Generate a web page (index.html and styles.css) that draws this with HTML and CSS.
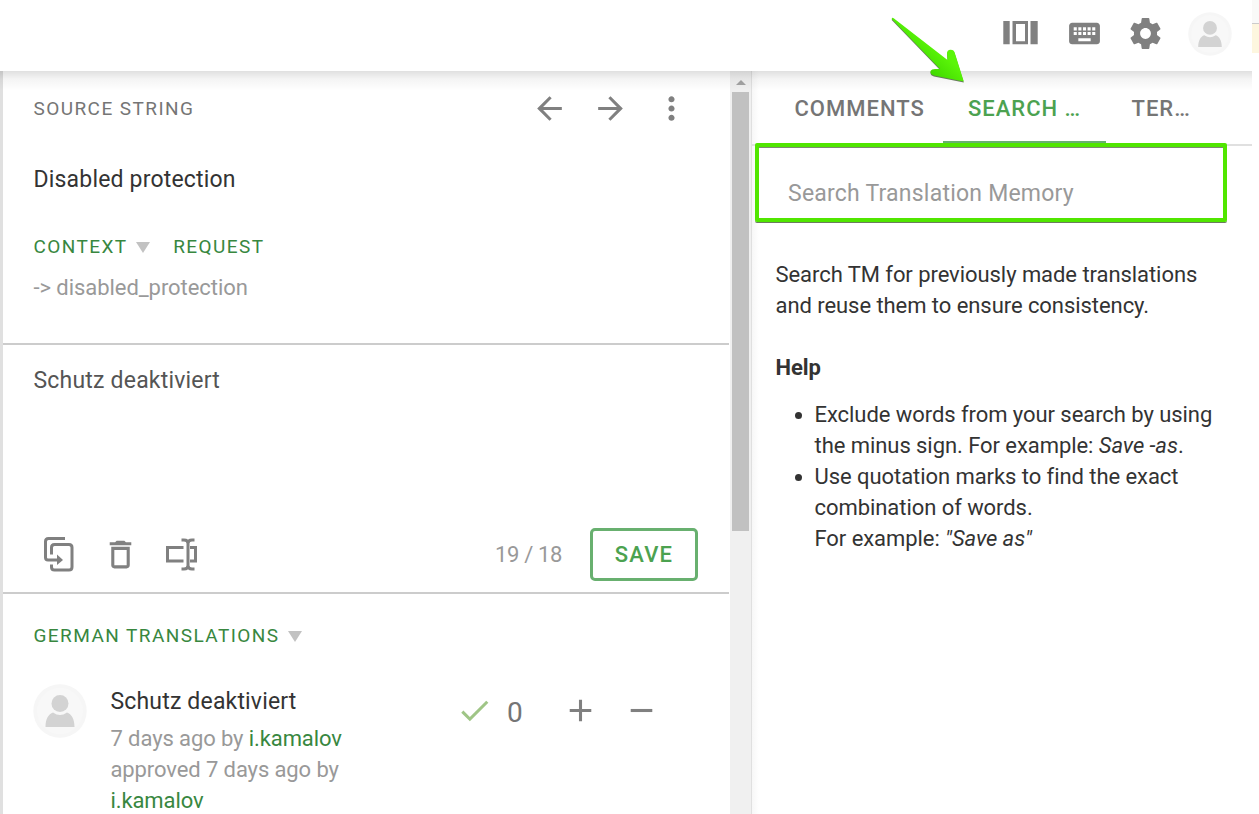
FILE: index.html
```html
<!DOCTYPE html>
<html lang="en">
<head>
<meta charset="utf-8">
<title>Translation editor</title>
<link rel="stylesheet" href="styles.css">
</head>
<body>
<svg width="0" height="0" class="defs">
  <symbol id="person" viewBox="0 0 54 54">
    <circle cx="27" cy="27" r="26.700" fill="#f6f6f6"/>
    <circle cx="27" cy="27" r="23" fill="#f8f8f8"/>
    <circle cx="27" cy="19.500" r="8.500" fill="#d3d3d3"/>
    <path d="M12.500 43C12.500 35 15.500 30 20 28.500Q27 33.500 34 28.500C38.500 30 41.500 35 41.500 43Z" fill="#d3d3d3"/>
  </symbol>
</svg>
<div class="app">
  <div class="window">
    <header class="topbar">
      <svg class="icon columns" viewBox="0 0 37 37"><path fill-rule="evenodd" d="M1.300 6H7.700V29.300H1.300ZM10.500 6H26V29.300H10.500ZM14 9V26.300H23V9ZM28.500 6H35.700V29.300H28.500Z"/></svg>
      <svg class="icon" viewBox="0 0 24 24"><path d="M20 5H4c-1.100 0-1.990.9-1.990 2L2 17c0 1.100.9 2 2 2h16c1.100 0 2-.9 2-2V7c0-1.100-.9-2-2-2zm-9 3h2v2h-2V8zm0 3h2v2h-2v-2zM8 8h2v2H8V8zm0 3h2v2H8v-2zm-1 2H5v-2h2v2zm0-3H5V8h2v2zm9 7H8v-2h8v2zm0-4h-2v-2h2v2zm0-3h-2V8h2v2zm3 3h-2v-2h2v2zm0-3h-2V8h2v2z"/></svg>
      <svg class="icon" viewBox="0 0 24 24"><path d="M19.430 12.980c.04-.32.07-.64.07-.98s-.03-.66-.07-.98l2.110-1.650c.19-.15.24-.42.12-.64l-2-3.460c-.12-.22-.39-.3-.61-.22l-2.490 1c-.52-.4-1.080-.73-1.690-.98l-.38-2.650C14.460 2.180 14.250 2 14 2h-4c-.25 0-.46.18-.49.42l-.38 2.650c-.61.25-1.170.59-1.690.98l-2.490-1c-.23-.09-.49 0-.61.22l-2 3.460c-.13.22-.07.49.12.64l2.110 1.650c-.04.32-.07.65-.07.98s.03.66.07.98l-2.110 1.650c-.19.15-.24.42-.12.64l2 3.460c.12.22.39.3.61.22l2.490-1c.52.4 1.080.73 1.690.98l.38 2.650c.03.24.24.42.49.42h4c.25 0 .46-.18.49-.42l.38-2.650c.61-.25 1.170-.59 1.690-.98l2.490 1c.23.09.49 0 .61-.22l2-3.460c.12-.22.07-.49-.12-.64l-2.110-1.650zM12 15.500c-1.930 0-3.500-1.570-3.500-3.500s1.570-3.500 3.500-3.500 3.500 1.570 3.500 3.500-1.570 3.500-3.500 3.500z"/></svg>
      <svg class="avatar-small"><use href="#person"/></svg>
    </header>
    <div class="panes">
      <main class="editor">
        <section class="source">
          <div class="row source-head">
            <span class="label muted">SOURCE STRING</span>
            <div class="icons">
              <svg class="icon" viewBox="0 0 24 24"><path d="M20 11H7.830l5.590-5.590L12 4l-8 8 8 8 1.410-1.410L7.830 13H20v-2z"/></svg>
              <svg class="icon" viewBox="0 0 24 24"><path d="M12 4l-1.410 1.410L16.170 11H4v2h12.170l-5.580 5.590L12 20l8-8z"/></svg>
              <svg class="icon" viewBox="0 0 24 24"><path d="M12 8c1.100 0 2-.9 2-2s-.9-2-2-2-2 .9-2 2 .9 2 2 2zm0 2c-1.100 0-2 .9-2 2s.9 2 2 2 2-.9 2-2-.9-2-2-2zm0 6c-1.100 0-2 .9-2 2s.9 2 2 2 2-.9 2-2-.9-2-2-2z"/></svg>
            </div>
          </div>
          <div class="row source-text">Disabled protection</div>
          <div class="row context-head"><span class="label green">CONTEXT</span><i class="caret"></i><span class="label green request">REQUEST</span></div>
          <div class="context-text">-&gt; disabled_protection</div>
        </section>
        <section class="translate">
          <div class="translation">Schutz deaktiviert</div>
          <div class="row toolbar">
            <svg class="icon" viewBox="0 0 37 37"><g fill="none" stroke="#808080" stroke-width="3"><path d="M24 2.500H7.500Q4.500 2.500 4.500 5.500V21.500Q4.500 24 7 24H17"/><path d="M10.500 18.500V11.500Q10.500 8.500 13.500 8.500H28Q31 8.500 31 11.500V31Q31 34 28 34H13.500Q10.500 34 10.500 31V28.500"/></g><path d="M16 18.500L22 24L16 29Z"/></svg>
            <svg class="icon" viewBox="0 0 24 24"><path d="M6 19c0 1.100.9 2 2 2h8c1.100 0 2-.9 2-2V7H6v12zM8 9h8v10H8V9zm7.500-5l-1-1h-5l-1 1H5v2h14V4z"/></svg>
            <svg class="icon" viewBox="0 0 37 37"><g fill="none" stroke="#808080" stroke-width="3" transform="translate(.5 .5)"><path d="M20 11H4V24.500H20"/><path d="M18 3.500H20.500Q24.500 3.500 24.500 7V29Q24.500 32.500 20.500 32.500H18M31 3.500H28.500Q24.500 3.500 24.500 7V29Q24.500 32.500 28.500 32.500H31"/><path d="M26.500 11H32V24.500H26.500"/></g></svg>
            <span class="counter">19 / 18</span>
            <button class="save">SAVE</button>
          </div>
        </section>
        <section class="suggestions">
          <div class="row german"><span class="label green">GERMAN TRANSLATIONS</span><i class="caret"></i></div>
          <div class="suggestion">
            <svg class="avatar"><use href="#person"/></svg>
            <div class="details">
              <div class="name">Schutz deaktiviert</div>
              <div class="meta">7 days ago by <a>i.kamalov</a><br>approved 7 days ago by<br><a>i.kamalov</a></div>
            </div>
            <div class="votes">
              <svg class="icon check" viewBox="0 0 24 24"><path d="M9 16.200L4.800 12l-1.400 1.400L9 19 21 7l-1.400-1.400L9 16.200z"/></svg>
              <span class="zero">0</span>
              <svg class="icon" viewBox="0 0 24 24"><path d="M19 13h-6v6h-2v-6H5v-2h6V5h2v6h6v2z"/></svg>
              <svg class="icon minus" viewBox="0 0 24 24"><path d="M19 13H5v-2h14v2z"/></svg>
            </div>
          </div>
        </section>
      </main>
      <div class="scrollbar"><i class="up"></i><div class="thumb"></div></div>
      <aside class="side">
        <nav class="tabs"><span class="tab t1">COMMENTS</span><span class="tab active">SEARCH …</span><span class="tab t3">TER…</span></nav>
        <div class="search"><span>Search Translation Memory</span></div>
        <div class="help">
          <p>Search TM for previously made translations<br>and reuse them to ensure consistency.</p>
          <h2>Help</h2>
          <ul>
            <li>Exclude words from your search by using<br>the minus sign. For example: <em>Save -as</em>.</li>
            <li>Use quotation marks to find the exact<br>combination of words.<br>For example: <em>"Save as"</em></li>
          </ul>
        </div>
      </aside>
      <div class="shade"></div>
    </div>
  </div>
  <div class="outside"><div class="outside-top"></div><div class="outside-note"></div></div>
  <svg class="pointer" viewBox="0 0 80 72">
    <defs><linearGradient id="lime" x1="0.500" y1="0.850" x2="0.750" y2="0.600"><stop offset="0" stop-color="#40d800"/><stop offset="1" stop-color="#5bf508"/></linearGradient></defs>
    <path transform="translate(0 1)" fill="#68785f" d="M6.700 8Q7 6 9 7.500L62.500 49L62 42.500Q62 39 65.500 38.700Q68.500 38.500 69.500 41L78.800 70.500L49 64.500Q45 63.500 45.500 60Q46.500 58 50 58L55 58Z"/>
    <path fill="url(#lime)" d="M6.700 8Q7 6 9 7.500L62.500 49L62 42.500Q62 39 65.500 38.700Q68.500 38.500 69.500 41L78.800 70.500L49 64.500Q45 63.500 45.500 60Q46.500 58 50 58L55 58Z"/>
  </svg>
</div>
</body>
</html>
```
FILE: styles.css
```css
* { box-sizing: border-box; }
body { margin: 0; font-family: Roboto, sans-serif; color: #333; background: #fff; overflow: hidden; }
.defs { position: absolute; }
.app { position: relative; width: 1259px; height: 814px; display: flex; overflow: hidden; }
.window { width: 1252px; display: flex; flex-direction: column; }
.topbar { height: 71px; flex: none; display: flex; align-items: center; justify-content: flex-end; padding: 0 20px 4px 0; gap: 24px; }
.icon { width: 37px; height: 37px; flex: none; fill: #808080; display: block; overflow: visible; }
.columns { margin-right: 3px; }
.avatar-small { width: 44px; height: 44px; display: block; }
.panes { height: 743px; display: flex; position: relative; }
.shade { position: absolute; inset: 0 0 auto; height: 20px; background: linear-gradient(rgba(0,0,0,.12), rgba(0,0,0,.045) 40%, rgba(0,0,0,0)); }
.editor { width: 730px; flex: none; border-left: 3px solid #e0e0e0; overflow: hidden; }
.row { display: flex; align-items: center; }
.source { height: 274px; padding-left: 30.500px; border-bottom: 2px solid #ccc; margin-right: 1px; }
.label { font-size: 19px; letter-spacing: 1.430px; white-space: nowrap; }
.muted { color: #757575; }
.green { color: #38873f; }
.source-head { height: 74px; justify-content: space-between; padding-right: 39px; }
.icons { display: flex; gap: 24px; }
.source-text { height: 68px; font-size: 23px; letter-spacing: .18px; padding-top: 1px; }
.context-head { height: 32px; margin-top: 17px; }
.caret { border: 7.500px solid transparent; border-top: 11.500px solid #c2c2c2; border-bottom: 0; margin: 2px 0 0 8.500px; }
.request { margin-left: 23px; }
.context-text { margin-top: 10px; font-size: 22px; line-height: 32px; letter-spacing: -.06px; color: #999; }
.translate { height: 249px; border-bottom: 2px solid #ccc; padding: 20px 31px 0 30.500px; margin-right: 1px; display: flex; flex-direction: column; }
.translation { font-size: 23px; line-height: 32px; letter-spacing: .2px; color: #555; }
.toolbar { margin-top: auto; height: 75px; gap: 24px; padding-left: 7px; }
.counter { margin-left: auto; font-size: 22px; color: #999; letter-spacing: -.35px; white-space: nowrap; }
.save { font: 500 22px Roboto, sans-serif; letter-spacing: 1.200px; color: #4ca250; background: #fff; border: 3px solid #68b06f; border-radius: 5px; width: 108px; height: 53px; padding: 0; margin-left: 4px; }
.suggestions { padding-left: 30.500px; }
.german { height: 83px; }
.suggestion { display: flex; margin-top: 6px; }
.avatar { width: 54px; height: 54px; flex: none; margin: .5px 0 0 -.5px; }
.details { margin-left: 23.500px; width: 333.500px; }
.name { font-size: 23px; line-height: 36px; letter-spacing: .17px; padding-top: 1px; }
.meta { margin-top: 3px; font-size: 22px; line-height: 31px; letter-spacing: -.1px; color: #999; }
.meta a { color: #38873f; }
.votes { display: flex; align-items: center; height: 54px; margin-left: 12px; }
.check { fill: #9fc586; }
.zero { width: 16px; margin: 4px 39px 0 14px; font-size: 28px; color: #757575; }
.minus { margin-left: 24px; }
.scrollbar { width: 21px; flex: none; background: #f0f0f0; padding: 8px 2px 0; }
.up { display: block; width: 10px; margin: 1px 0 7px 4px; border: 5px solid transparent; border-top: 0; border-bottom: 5px solid #a3a3a3; }
.thumb { width: 17px; height: 439px; background: #c1c1c1; }
.side { width: 501px; border-left: 1px solid #e0e0e0; background: linear-gradient(90deg, #f7f7f7, #fff 7px); }
.tabs { height: 75px; display: flex; border-bottom: 2px solid #e0e0e0; }
.tab { height: 73px; line-height: 76px; font-size: 22px; font-weight: 500; letter-spacing: 1px; color: #757575; white-space: nowrap; }
.t1 { width: 191px; padding-left: 42.500px; }
.active { width: 163px; padding-left: 25px; color: #4ca250; border-bottom: 3px solid #68b06f; }
.t3 { padding-left: 25.500px; }
.search { position: relative; margin: -3px 0 0 3px; width: 472px; height: 79px; border: 4px solid #51e600; border-radius: 2px; box-shadow: 0 1px 0 #6b7c60, inset 0 1px 0 #7b8b70; padding: 9px 0 0 29px; line-height: 76px; font-size: 23px; color: #999; letter-spacing: .22px; }
.help { padding: 37px 0 0 23.500px; font-size: 22px; line-height: 31px; letter-spacing: -.06px; white-space: nowrap; }
.help p { margin: 0; }
.help h2 { margin: 31px 0 16px; font-size: 22px; line-height: 31px; font-weight: 700; }
.help ul { margin: 0; padding-left: 39px; }
.outside { width: 7px; }
.outside-top { height: 24px; background: #f9f9f8; border-bottom: 1px solid #ccc; }
.outside-note { height: 29px; background: #fdf6df; }
.pointer { position: absolute; left: 885px; top: 11px; width: 80px; height: 72px; overflow: visible; }
```
